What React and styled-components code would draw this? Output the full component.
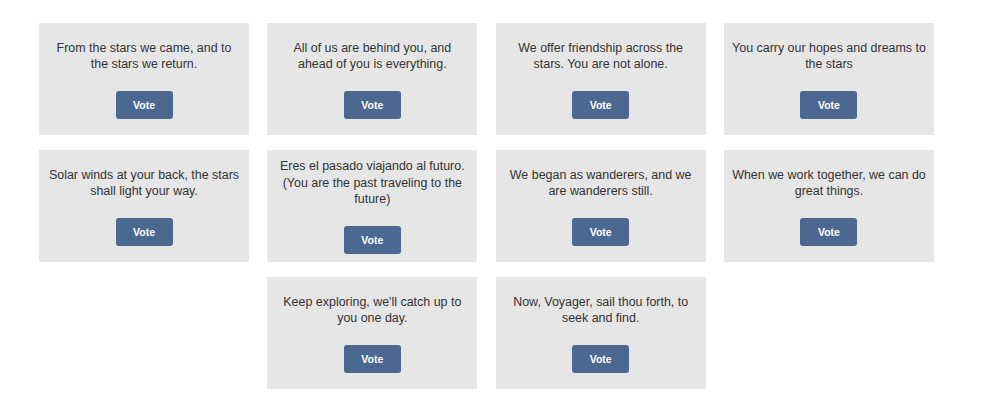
import React from "react";
import styled, { createGlobalStyle } from "styled-components";

const GlobalStyle = createGlobalStyle`
  html, body {
    margin: 0;
    padding: 0;
    background: #ffffff;
  }
  body {
    font-family: "Liberation Sans", Arial, sans-serif;
  }
`;

const Page = styled.main`
  padding: 23px 0 0 39px;
`;

const Grid = styled.div`
  width: 895px;
  display: flex;
  flex-wrap: wrap;
  justify-content: center;
  column-gap: 18.33px;
  row-gap: 15px;
`;

const Card = styled.div`
  box-sizing: border-box;
  width: 210px;
  height: 112px;
  padding: 8px;
  background: #e6e6e6;
  display: flex;
  flex-direction: column;
  align-items: center;
  justify-content: center;
  gap: 18px;
`;

const Quote = styled.p`
  margin: 0;
  font-size: 12.45px;
  line-height: 16.5px;
  color: #333333;
  text-align: center;
`;

const VoteButton = styled.button`
  width: 57px;
  height: 28px;
  flex: none;
  border: none;
  border-radius: 3px;
  background: #4b6890;
  color: #ffffff;
  font-family: "Liberation Sans", Arial, sans-serif;
  font-size: 10.5px;
  font-weight: bold;
  cursor: pointer;
  padding: 0;
`;

const quotes = [
  "From the stars we came, and to the stars we return.",
  "All of us are behind you, and ahead of you is everything.",
  "We offer friendship across the stars. You are not alone.",
  "You carry our hopes and dreams to the stars",
  "Solar winds at your back, the stars shall light your way.",
  "Eres el pasado viajando al futuro. (You are the past traveling to the future)",
  "We began as wanderers, and we are wanderers still.",
  "When we work together, we can do great things.",
  "Keep exploring, we'll catch up to you one day.",
  "Now, Voyager, sail thou forth, to seek and find.",
];

export default function App() {
  return (
    <>
      <GlobalStyle />
      <Page>
        <Grid>
          {quotes.map((q) => (
            <Card key={q}>
              <Quote>{q}</Quote>
              <VoteButton>Vote</VoteButton>
            </Card>
          ))}
        </Grid>
      </Page>
    </>
  );
}
